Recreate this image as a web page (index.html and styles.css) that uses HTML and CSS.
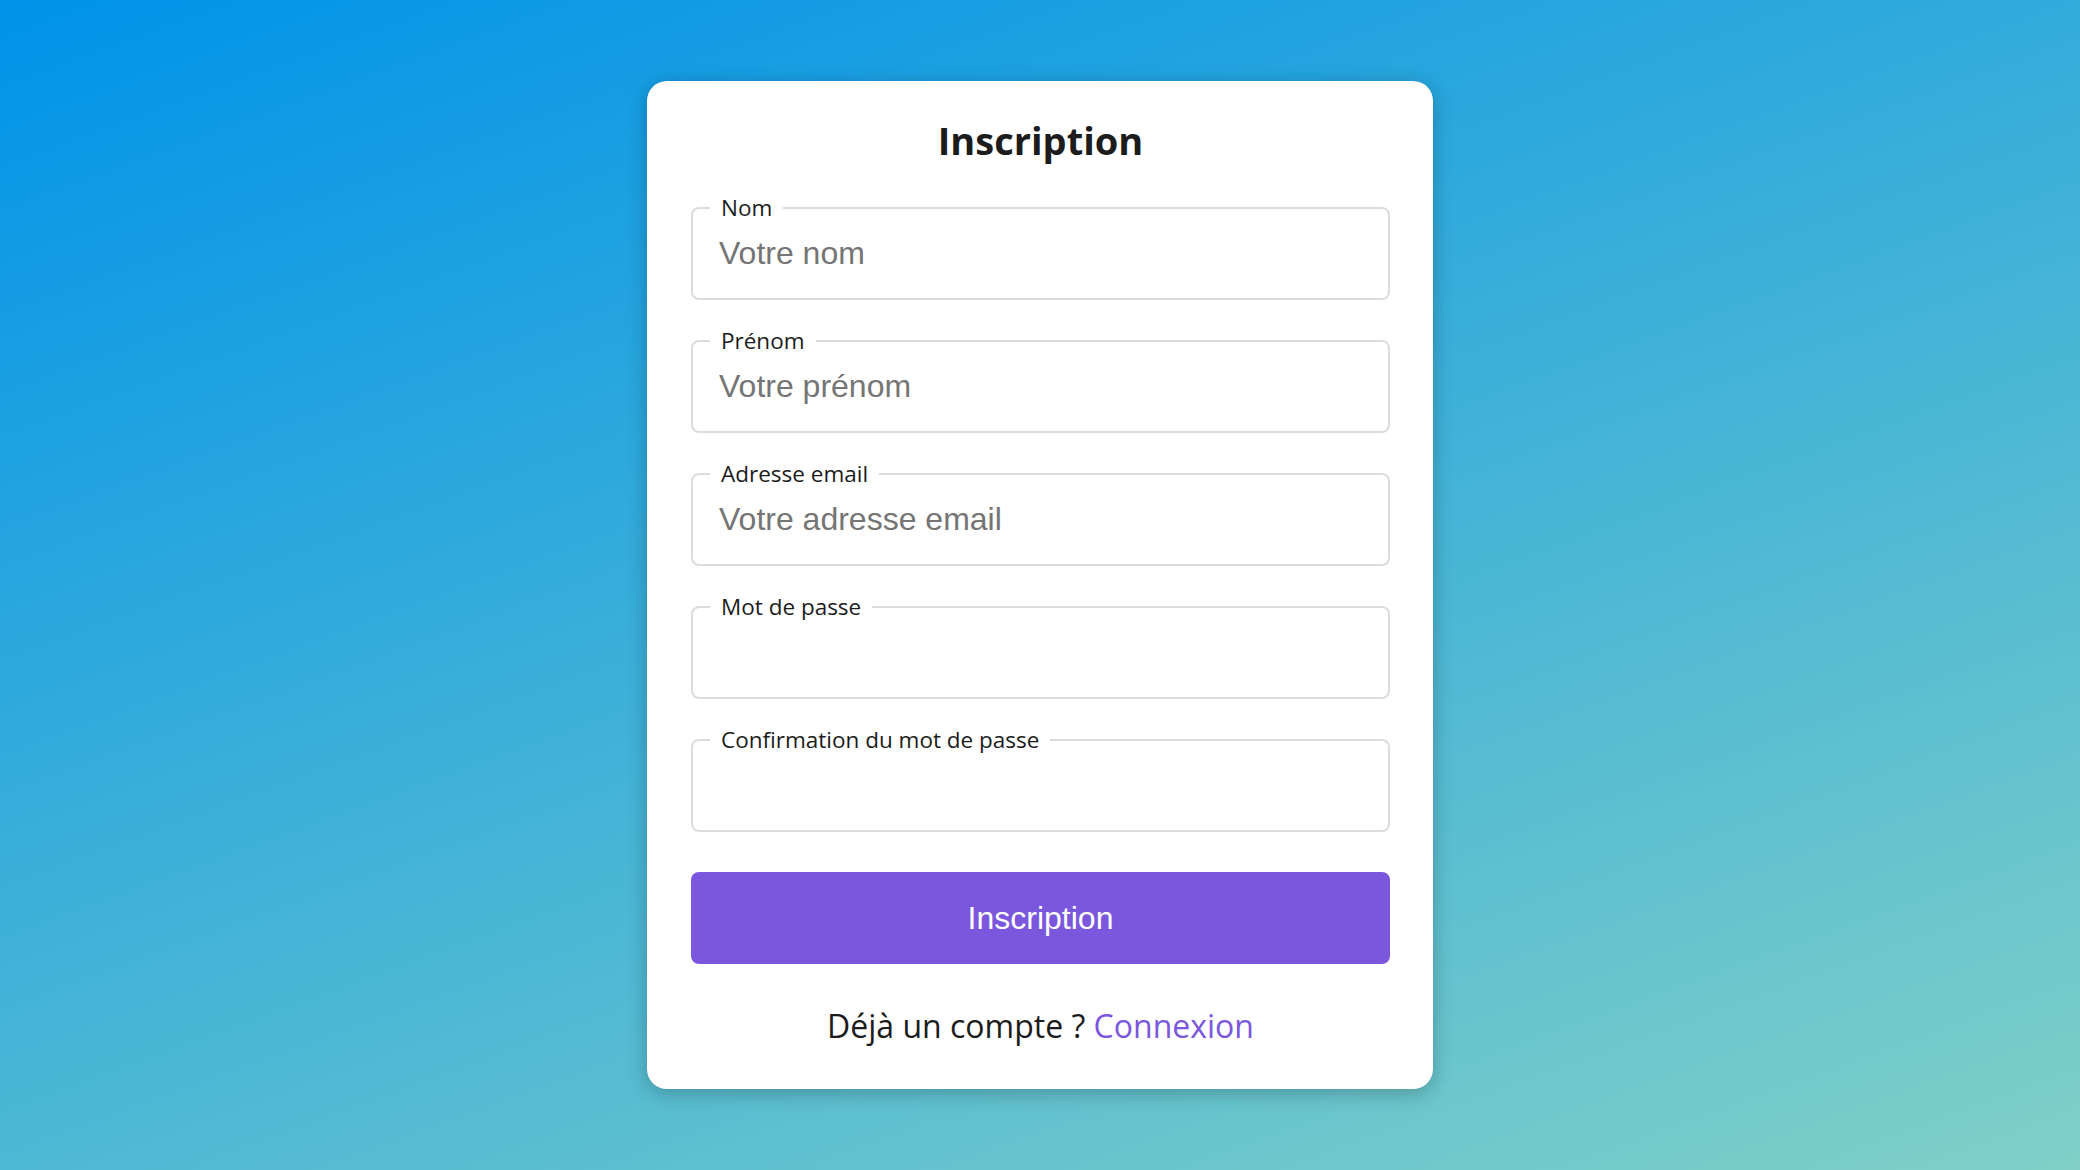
FILE: index.html
```html
<!DOCTYPE html>
<html lang="fr">
<head>
<meta charset="utf-8">
<title>Inscription</title>
<link rel="stylesheet" href="styles.css">
</head>
<body>
<main class="card">
  <h1 class="title">Inscription</h1>
  <form class="form">
    <fieldset class="field">
      <legend class="field-label">Nom</legend>
      <input class="field-input" type="text" placeholder="Votre nom">
    </fieldset>
    <fieldset class="field">
      <legend class="field-label">Prénom</legend>
      <input class="field-input" type="text" placeholder="Votre prénom">
    </fieldset>
    <fieldset class="field">
      <legend class="field-label">Adresse email</legend>
      <input class="field-input" type="email" placeholder="Votre adresse email">
    </fieldset>
    <fieldset class="field">
      <legend class="field-label">Mot de passe</legend>
      <input class="field-input" type="password">
    </fieldset>
    <fieldset class="field">
      <legend class="field-label">Confirmation du mot de passe</legend>
      <input class="field-input" type="password">
    </fieldset>
    <button class="submit" type="button">Inscription</button>
  </form>
  <p class="footer">Déjà un compte ? <a class="link" href="#">Connexion</a></p>
</main>
</body>
</html>
```
FILE: styles.css
```css
* {
  box-sizing: border-box;
}

html, body {
  margin: 0;
  padding: 0;
}

body {
  min-height: 100vh;
  display: flex;
  align-items: center;
  justify-content: center;
  font-family: "Open Sans", "Noto Sans", sans-serif;
  background-color: #0093E9;
  background-image: linear-gradient(160deg, #0093E9 0%, #80D0C7 100%);
  color: #1c1c1c;
}

.card {
  width: 786px;
  background: #ffffff;
  border-radius: 20px;
  padding: 33px 43px 42px 44px;
  box-shadow: 0 4px 20px rgba(0, 0, 0, 0.25);
  display: flex;
  flex-direction: column;
}

.title {
  margin: 0 0 27px;
  font-size: 38px;
  font-weight: 700;
  text-align: center;
  line-height: normal;
  color: #1c1c1c;
}

.form {
  display: flex;
  flex-direction: column;
  gap: 26px;
}

.field {
  margin: 0;
  padding: 0 17px 15px;
  border: 2px solid #dcdcdc;
  border-radius: 8px;
  min-width: 0;
}

.field-label {
  padding: 0 11px;
  font-size: 22.5px;
  line-height: 30px;
  color: #1c1c1c;
}

.field-input {
  display: block;
  width: 100%;
  height: 60px;
  border: none;
  outline: none;
  padding: 0 9px;
  font-family: "Liberation Sans", Arial, sans-serif;
  font-size: 32px;
  color: #222;
  background: transparent;
}

.field-input::placeholder {
  color: #757575;
}

.submit {
  margin-top: 14px;
  height: 92px;
  border: none;
  border-radius: 8px;
  background: #7b57de;
  color: #ffffff;
  font-family: "Liberation Sans", Arial, sans-serif;
  font-size: 32px;
  cursor: pointer;
}

.footer {
  margin: 40px 0 0;
  text-align: center;
  font-size: 32px;
  line-height: normal;
  color: #1c1c1c;
}

.link {
  color: #7b57de;
  text-decoration: none;
}
```
